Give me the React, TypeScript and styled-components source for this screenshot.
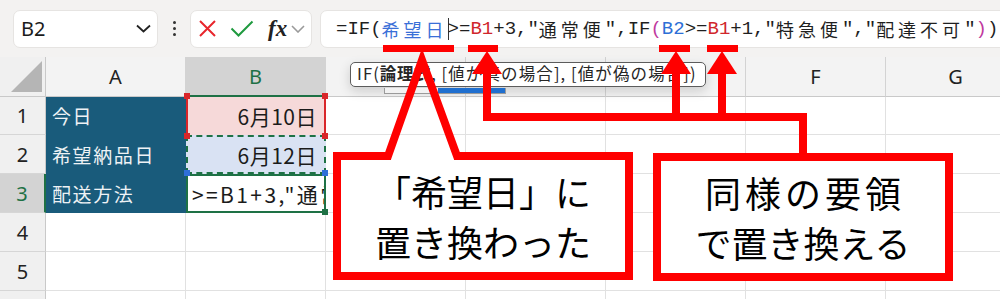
import React from 'react';
import styled, { createGlobalStyle, css } from 'styled-components';

const GlobalStyle = createGlobalStyle`
  html, body {
    margin: 0;
    padding: 0;
    background: #fff;
  }
  body {
    font-family: "Noto Sans", "Noto Sans CJK JP", sans-serif;
  }
`;

const RED = '#ff0000';
const XL_GREEN = '#1e7145';

const Screen = styled.div`
  position: relative;
  width: 1000px;
  height: 299px;
  overflow: hidden;
  background: #fff;
`;

/* ---------- formula bar ---------- */

const TopBar = styled.div`
  height: 57px;
  box-sizing: border-box;
  display: flex;
  align-items: center;
  padding-left: 13px;
  background: #f3f2f1;
`;

const Panel = styled.div`
  height: 38px;
  box-sizing: border-box;
  display: flex;
  align-items: center;
  background: #fff;
  border: 1px solid #e6e4e2;
  border-radius: 7px;
`;

const NameBox = styled(Panel)`
  width: 145px;
  padding: 0 6px 0 7px;
  justify-content: space-between;
  font-size: 20px;
  color: #1b1b1b;
`;

const Dots = styled.div`
  width: 32px;
  display: flex;
  flex-direction: column;
  align-items: center;
  gap: 3px;
  span {
    width: 3px;
    height: 3px;
    border-radius: 50%;
    background: #333;
  }
`;

const ButtonBox = styled(Panel)`
  width: 122px;
  padding-left: 7px;
  gap: 13px;
`;

const Fx = styled.span`
  font-family: "Liberation Serif", serif;
  font-style: italic;
  font-weight: 700;
  font-size: 23px;
  color: #222;
  margin-left: 1px;
  margin-right: -9px;
  line-height: 1;
`;

const FormulaBox = styled(Panel)`
  flex: 1;
  margin-left: 8px;
  margin-right: -12px;
  padding-left: 15px;
  white-space: nowrap;
  font-family: "Liberation Mono", monospace;
  font-size: 19px;
  color: #1f1f1f;
`;

const Token = styled.span<{ $color?: string; $cjk?: boolean }>`
  color: ${p => p.$color || 'inherit'};
  ${p =>
    p.$cjk &&
    css`
      font-family: "Noto Sans CJK JP", sans-serif;
      font-size: 18px;
      letter-spacing: 4px;
    `}
`;

const Caret = styled.span`
  display: inline-block;
  width: 1px;
  height: 22px;
  margin-right: -1px;
  vertical-align: middle;
  background: #333;
`;

/* ---------- grid ---------- */

const Sheet = styled.div`
  display: grid;
  grid-template-columns: 46px repeat(7, 140px);
  grid-template-rows: 40px 38px repeat(5, 39px);
`;

const Corner = styled.div`
  box-sizing: border-box;
  background: #f0f0f0;
  border-right: 1px solid #c9c9c9;
  border-bottom: 1px solid #c9c9c9;
  display: flex;
  align-items: flex-end;
  justify-content: flex-end;
  padding: 0 3px 4px 0;
`;

const ColHead = styled.div<{ $active?: boolean }>`
  box-sizing: border-box;
  display: flex;
  align-items: center;
  justify-content: center;
  font-size: 20px;
  color: #222;
  background: #f3f3f3;
  border-right: 1px solid #d3d3d3;
  border-bottom: 1px solid #c9c9c9;
  ${p =>
    p.$active &&
    css`
      background: #d3d3d3;
      color: ${XL_GREEN};
      border-bottom: 2px solid ${XL_GREEN};
    `}
`;

const RowHead = styled.div<{ $active?: boolean }>`
  box-sizing: border-box;
  display: flex;
  align-items: center;
  justify-content: center;
  font-size: 20px;
  color: #222;
  background: #f0f0f0;
  border-right: 1px solid #c9c9c9;
  border-bottom: 1px solid #d6d6d6;
  ${p =>
    p.$active &&
    css`
      background: #d3d3d3;
      color: ${XL_GREEN};
      border-right: 2px solid ${XL_GREEN};
    `}
`;

type Tone = 'label' | 'today' | 'wish' | 'active';

const toneStyles: Record<Tone, ReturnType<typeof css>> = {
  label: css`
    background: #195b7b;
    border-color: #195b7b;
    color: #eef2f5;
    font-size: 19px;
    letter-spacing: 1.6px;
    padding-left: 6px;
  `,
  today: css`
    background: #f6d9d9;
    border-left: 2px solid #d9262a;
    border-right: 2px solid #d9262a;
    border-bottom: none;
    justify-content: flex-end;
    padding-right: 7px;
    letter-spacing: 0.5px;
  `,
  wish: css`
    background: #d9e2f3;
    border: 2px dashed ${XL_GREEN};
    justify-content: flex-end;
    padding-right: 7px;
    letter-spacing: 0.5px;
  `,
  active: css`
    background: #fff;
    border: 2px solid ${XL_GREEN};
    padding-left: 4px;
    letter-spacing: 2.4px;
  `,
};

const Cell = styled.div<{ $tone?: Tone }>`
  position: relative;
  box-sizing: border-box;
  display: flex;
  align-items: center;
  min-width: 0;
  border-right: 1px solid #e1e1e1;
  border-bottom: 1px solid #e1e1e1;
  font-family: "Noto Sans CJK JP", sans-serif;
  font-size: 21px;
  color: #1b1b1b;
  white-space: nowrap;
  ${p => p.$tone && toneStyles[p.$tone]}
`;

const CellText = styled.span`
  overflow: hidden;
  width: 100%;
`;

type Corner = 'tl' | 'tr' | 'bl' | 'br';

const Handle = styled.span<{ $at: Corner; $color: string }>`
  position: absolute;
  width: 6px;
  height: 6px;
  background: ${p => p.$color};
  ${p => (p.$at[0] === 't' ? 'top: -4px;' : 'bottom: -4px;')}
  ${p => (p.$at[1] === 'l' ? 'left: -4px;' : 'right: -4px;')}
  z-index: 1;
`;

/* ---------- overlays ---------- */

const ArgTip = styled.div`
  position: absolute;
  left: 350px;
  top: 62px;
  width: 356px;
  height: 25px;
  box-sizing: border-box;
  padding-left: 6px;
  background: #fff;
  border: 1.5px solid #5c5c5c;
  border-radius: 5px;
  box-shadow: 0 4px 12px rgba(0, 0, 0, 0.16);
  font-family: "Noto Sans CJK JP", sans-serif;
  font-size: 16.5px;
  letter-spacing: 1.1px;
  line-height: 21px;
  color: #262626;
  white-space: nowrap;
  b {
    font-weight: 700;
    letter-spacing: 0.6px;
  }
`;

const TipTrack = styled.div`
  position: absolute;
  left: 33px;
  top: 25px;
  width: 122px;
  height: 6px;
  box-sizing: border-box;
  border: 1px solid #9a9a9a;
  border-top: none;
  background: #f2f2f2;
  display: flex;
  justify-content: flex-end;
  span {
    width: 67px;
    background: #1f6fcf;
  }
`;

const Callout = styled.div<{ $left: number; $top: number }>`
  position: absolute;
  left: ${p => p.$left}px;
  top: ${p => p.$top}px;
  width: 300px;
  height: 128px;
  box-sizing: border-box;
  border: 8px solid ${RED};
  background: #fff;
  display: flex;
  flex-direction: column;
  align-items: center;
  justify-content: center;
  font-family: "Noto Sans CJK JP", sans-serif;
  font-weight: 400;
  font-size: 36px;
  line-height: 50px;
  color: #000;
  z-index: 2;
`;

const CalloutLine = styled.div<{ $spacing?: number }>`
  letter-spacing: ${p => p.$spacing ?? 0}px;
  margin-right: -${p => p.$spacing ?? 0}px;
  white-space: nowrap;
`;

const Marks = styled.svg`
  position: absolute;
  left: 0;
  top: 0;
  z-index: 3;
  pointer-events: none;
`;

/* ---------- data ---------- */

type Seg = { t: string; c?: string; cjk?: boolean; caret?: boolean };

const NAME_BLUE = '#3a6fd8';
const REF_RED = '#d0262b';
const REF_BLUE = '#2d6fd6';
const PAREN = '#c0399e';

const formula: Seg[] = [
  { t: '=IF(' },
  { t: '希望日', c: NAME_BLUE, cjk: true },
  { t: '', caret: true },
  { t: '>=' },
  { t: 'B1', c: REF_RED },
  { t: '+3,"' },
  { t: '通常便', cjk: true },
  { t: '",IF' },
  { t: '(', c: PAREN },
  { t: 'B2', c: REF_BLUE },
  { t: '>=' },
  { t: 'B1', c: REF_RED },
  { t: '+1,"' },
  { t: '特急便', cjk: true },
  { t: '","' },
  { t: '配達不可', cjk: true },
  { t: '"' },
  { t: ')', c: PAREN },
  { t: ')' },
];

// C, D and E sit under the argument tooltip, so their labels are not shown
const columns = ['A', 'B', '', '', '', 'F', 'G'];
const emptyCols = 5;

function Arrow({ x }: { x: number }) {
  return <polygon points={`${x},51 ${x - 15},74 ${x + 15},74`} fill={RED} />;
}

export default function App() {
  return (
    <Screen>
      <GlobalStyle />
      <TopBar>
        <NameBox>
          <span>B2</span>
          <svg width="15" height="9" viewBox="0 0 15 9">
            <path d="M1 1.5 L7.5 7.5 L14 1.5" fill="none" stroke="#222" strokeWidth="1.8" />
          </svg>
        </NameBox>
        <Dots>
          <span />
          <span />
          <span />
        </Dots>
        <ButtonBox>
          <svg width="19" height="19" viewBox="0 0 19 19">
            <path d="M2 2 L17 17 M17 2 L2 17" stroke="#e8262c" strokeWidth="2" />
          </svg>
          <svg width="24" height="19" viewBox="0 0 24 19">
            <path d="M1.5 9.5 L8.5 16.5 L22.5 2.5" fill="none" stroke="#1f9a3f" strokeWidth="2" />
          </svg>
          <Fx>fx</Fx>
          <svg width="14" height="8" viewBox="0 0 14 8">
            <path d="M1 1 L7 7 L13 1" fill="none" stroke="#9a9a9a" strokeWidth="1.6" />
          </svg>
        </ButtonBox>
        <FormulaBox>
          {formula.map((s, i) =>
            s.caret ? (
              <Caret key={i} />
            ) : (
              <Token key={i} $color={s.c} $cjk={s.cjk}>
                {s.t}
              </Token>
            )
          )}
        </FormulaBox>
      </TopBar>

      <Sheet>
        <Corner>
          <svg width="31" height="31" viewBox="0 0 31 31">
            <polygon points="0,31 31,0 31,31" fill="#b5b5b5" />
          </svg>
        </Corner>
        {columns.map((c, i) => (
          <ColHead key={i} $active={c === 'B'}>
            {c}
          </ColHead>
        ))}

        <RowHead>1</RowHead>
        <Cell $tone="label">今日</Cell>
        <Cell $tone="today">
          6月10日
          <Handle $at="tl" $color="#d9262a" />
          <Handle $at="tr" $color="#d9262a" />
          <Handle $at="bl" $color="#d9262a" />
          <Handle $at="br" $color="#d9262a" />
        </Cell>
        {Array.from({ length: emptyCols }, (_, i) => (
          <Cell key={i} />
        ))}

        <RowHead>2</RowHead>
        <Cell $tone="label">希望納品日</Cell>
        <Cell $tone="wish">
          6月12日
          <Handle $at="bl" $color="#2f6fd8" />
          <Handle $at="br" $color="#2f6fd8" />
        </Cell>
        {Array.from({ length: emptyCols }, (_, i) => (
          <Cell key={i} />
        ))}

        <RowHead $active>3</RowHead>
        <Cell $tone="label">配送方法</Cell>
        <Cell $tone="active">
          <CellText>&gt;=B1+3,"通常便"</CellText>
          <Handle $at="br" $color={XL_GREEN} />
        </Cell>
        {Array.from({ length: emptyCols }, (_, i) => (
          <Cell key={i} />
        ))}

        {[4, 5, 6].map(r => (
          <React.Fragment key={r}>
            <RowHead>{r < 6 ? r : ''}</RowHead>
            {columns.map((_, i) => (
              <Cell key={i} />
            ))}
          </React.Fragment>
        ))}
      </Sheet>

      <ArgTip>
        IF(<b>論理式</b>, [値が真の場合], [値が偽の場合])
        <TipTrack>
          <span />
        </TipTrack>
      </ArgTip>

      <Callout $left={333} $top={152}>
        <CalloutLine>「希望日」に</CalloutLine>
        <CalloutLine>置き換わった</CalloutLine>
      </Callout>
      <Callout $left={653} $top={153}>
        <CalloutLine $spacing={4}>同様の要領</CalloutLine>
        <CalloutLine>で置き換える</CalloutLine>
      </Callout>

      <Marks width="1000" height="299" viewBox="0 0 1000 299">
        {/* underlines in the formula */}
        <rect x="383" y="45" width="71" height="7" fill={RED} />
        <rect x="468" y="45" width="30" height="7" fill={RED} />
        <rect x="659" y="45" width="31" height="7" fill={RED} />
        <rect x="707" y="45" width="31" height="7" fill={RED} />

        {/* left callout pointer */}
        <rect x="391" y="151" width="63" height="10" fill="#fff" />
        <path
          d="M378 156 L388 156 L422 60 L457 156 L467 156"
          fill="none"
          stroke={RED}
          strokeWidth="8"
          strokeLinejoin="miter"
          strokeMiterlimit="10"
        />

        {/* right callout connectors */}
        <path
          d="M487 72 V117 H803 V158"
          fill="none"
          stroke={RED}
          strokeWidth="8"
          strokeLinejoin="miter"
        />
        <path d="M676 72 V117 M722 72 V117" fill="none" stroke={RED} strokeWidth="8" />
        <Arrow x={487} />
        <Arrow x={676} />
        <Arrow x={722} />
      </Marks>
    </Screen>
  );
}
